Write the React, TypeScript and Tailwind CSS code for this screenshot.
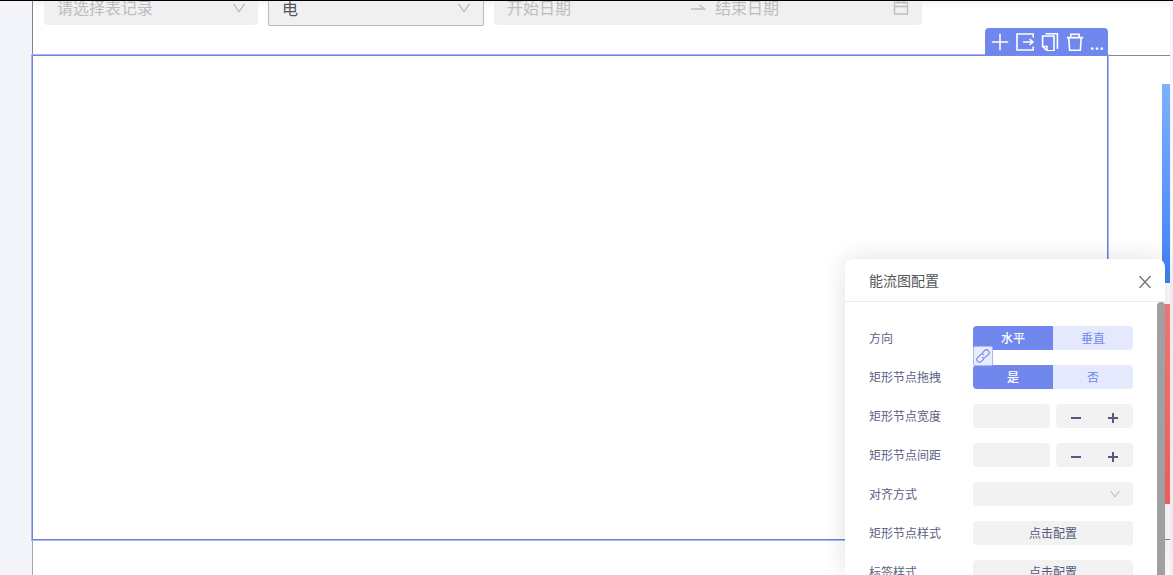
import { useState } from "react";
import type { ReactNode } from "react";

const Chevron = ({ className }: { className: string }) => (
    <svg viewBox="0 0 12 10" fill="none" stroke="currentColor" strokeWidth="1.3" className={className} aria-hidden="true">
        <path d="M0.5 1 L6 8.6 L11.5 1" />
    </svg>
);

const FilterBar = () => (
    <header className="flex h-[54px] shrink-0 items-start gap-[10px] overflow-hidden border-l border-[#858585] bg-linear-to-b from-[#f7f3fb] to-white to-15% pl-[11px] text-base text-[#bdbdbd]">
        <div className="relative -mt-3 w-[214px]">
            <select aria-label="表记录" className="block h-9 w-full appearance-none rounded bg-[#eff0f2] px-[13px] outline-none">
                <option>请选择表记录</option>
            </select>
            <Chevron className="pointer-events-none absolute top-[14px] right-[13px] h-[10px] w-3" />
        </div>
        <div className="relative -mt-3 w-[216px]">
            <select aria-label="能源类型" className="block h-[37px] w-full appearance-none rounded-xs border border-[#bcbcbc] bg-[#eff0f2] px-[13px] text-[#555] outline-none">
                <option>电</option>
            </select>
            <Chevron className="pointer-events-none absolute top-[14px] right-[14px] h-[10px] w-3" />
        </div>
        <div className="-mt-3 flex h-9 w-[428px] items-center rounded bg-[#eff0f2] px-[13px]">
            <input
                aria-label="开始日期"
                placeholder="开始日期"
                className="w-[183px] min-w-0 bg-transparent outline-none placeholder:text-[#bdbdbd]"
            />
            <svg viewBox="0 0 16 8" fill="none" stroke="currentColor" strokeWidth="1.3" className="mr-[9px] h-2 w-4 shrink-0" aria-hidden="true">
                <path d="M1 6 H14.5 L9.5 2" />
            </svg>
            <input
                aria-label="结束日期"
                placeholder="结束日期"
                className="min-w-0 flex-1 bg-transparent outline-none placeholder:text-[#bdbdbd]"
            />
            <svg viewBox="0 0 16 16" fill="none" stroke="currentColor" strokeWidth="1.3" className="size-4 shrink-0" aria-hidden="true">
                <path d="M1.5 3.5 H14.5 V15 H1.5 Z M1.5 7.5 H14.5 M5 2 V5 M11 2 V5" />
            </svg>
        </div>
    </header>
);

const tools = [
    { name: "添加", path: "M9 0.8 V17.2 M0.8 9 H17.2" },
    { name: "移动", path: "M17.2 4.5 V1 H1 V17 H17.2 V13.5 M7 9 H17 M13.5 6.2 L17 9 L13.5 11.8" },
    { name: "复制", path: "M1.6 3 H13 V17.8 H6 L1.6 13.5 Z M1.6 13.5 H6 V17.8 M4.5 0.6 H16.4 V16" },
    { name: "删除", path: "M0.8 4.6 H17.2 M4.8 4.6 V1.2 H13.2 V4.6 M2.8 4.6 L3.6 17.2 H14.4 L15.2 4.6" },
];

const Toolbar = () => (
    <div className="absolute -top-7 -right-px flex h-7 items-center gap-[7px] rounded-t bg-[#7087ee] pr-[5px] pl-[6px] text-white">
        {tools.map((tool) => (
            <button key={tool.name} aria-label={tool.name} className="size-[18px]">
                <svg viewBox="0 0 18 18" fill="none" stroke="currentColor" strokeWidth="1.6" className="size-[18px]">
                    <path d={tool.path} />
                </svg>
            </button>
        ))}
        <button aria-label="更多" className="h-[18px] w-3">
            <svg viewBox="0 0 12 18" fill="currentColor" className="h-[18px] w-3">
                <path d="M0 14.5 h2.4 v2.2 h-2.4z M4.8 14.5 h2.4 v2.2 h-2.4z M9.6 14.5 h2.4 v2.2 h-2.4z" />
            </svg>
        </button>
    </div>
);

const Row = ({ label, htmlFor, children }: { label: string; htmlFor?: string; children: ReactNode }) => (
    <div className="flex h-6 shrink-0 items-center justify-between">
        <label htmlFor={htmlFor} className="text-[#5b6181]">{label}</label>
        <div className="w-40">{children}</div>
    </div>
);

const Segmented = ({ label, options }: { label: string; options: string[] }) => {
    const [value, setValue] = useState(options[0]);
    return (
        <div role="group" aria-label={label} className="flex overflow-hidden rounded">
            {options.map((option) => (
                <button
                    key={option}
                    aria-pressed={value === option}
                    onClick={() => setValue(option)}
                    className={`h-6 flex-1 ${value === option ? "bg-[#7087ee] font-medium text-white" : "bg-[#e4e9fd] text-[#7087ee]"}`}
                >
                    {option}
                </button>
            ))}
        </div>
    );
};

const Stepper = ({ id }: { id: string }) => {
    const [value, setValue] = useState("");
    const step = (delta: number) => setValue(String(Number(value) + delta));
    return (
        <div className="grid grid-cols-2 gap-[6px]">
            <input
                id={id}
                value={value}
                onChange={(e) => setValue(e.target.value)}
                className="h-6 min-w-0 rounded bg-[#f2f2f2] px-2 text-[#5b6181] outline-none"
            />
            <div className="flex h-6 rounded bg-[#f2f2f2] px-px text-[#555b7c]">
                <button aria-label="减少" onClick={() => step(-1)} className="flex flex-1 items-center justify-center pt-1">
                    <svg viewBox="0 0 10 10" stroke="currentColor" strokeWidth="2" className="size-[10px]">
                        <path d="M0 5 H10" />
                    </svg>
                </button>
                <button aria-label="增加" onClick={() => step(1)} className="flex flex-1 items-center justify-center pt-1">
                    <svg viewBox="0 0 10 10" stroke="currentColor" strokeWidth="2" className="size-[10px]">
                        <path d="M0 5 H10 M5 0 V10" />
                    </svg>
                </button>
            </div>
        </div>
    );
};

const ConfigPanel = () => (
    <section className="absolute top-[258px] right-2 bottom-0 flex w-80 flex-col overflow-hidden rounded-t-lg bg-white text-xs shadow-[0_0_24px_rgba(0,0,0,0.12)]">
        <div className="flex h-[43px] shrink-0 items-center justify-between border-b border-[#ebebeb] pr-[14px] pl-6">
            <h2 className="text-sm text-[#555]">能流图配置</h2>
            <button aria-label="关闭" className="pt-1 text-[#777]">
                <svg viewBox="0 0 12 12" fill="none" stroke="currentColor" strokeWidth="1.4" className="size-3">
                    <path d="M0.5 0 L11.5 12 M11.5 0 L0.5 12" />
                </svg>
            </button>
        </div>
        <div className="flex min-h-0 flex-1">
            <div className="flex flex-1 flex-col gap-[15px] overflow-y-auto px-6 pt-6 [scrollbar-width:none]">
                <Row label="方向">
                    <div className="relative">
                        <Segmented label="方向" options={["水平", "垂直"]} />
                        <button
                            aria-label="关联"
                            className="absolute top-5 left-0 z-10 flex size-5 items-center justify-center rounded-xs border border-[#a9b7f5] bg-[#e8ecfd] text-[#7087ee]"
                        >
                            <svg viewBox="0 0 14 14" fill="none" stroke="currentColor" strokeWidth="1.1" className="size-[14px]">
                                <path d="M6 4.2 L8.6 1.6 A2.6 2.6 0 0 1 12.4 5.4 L9.6 8.2 A2.6 2.6 0 0 1 6 8.2 M8 9.8 L5.4 12.4 A2.6 2.6 0 0 1 1.6 8.6 L4.4 5.8 A2.6 2.6 0 0 1 8 5.8" />
                            </svg>
                        </button>
                    </div>
                </Row>
                <Row label="矩形节点拖拽">
                    <Segmented label="矩形节点拖拽" options={["是", "否"]} />
                </Row>
                <Row label="矩形节点宽度" htmlFor="node-width">
                    <Stepper id="node-width" />
                </Row>
                <Row label="矩形节点间距" htmlFor="node-gap">
                    <Stepper id="node-gap" />
                </Row>
                <Row label="对齐方式" htmlFor="align">
                    <div className="relative">
                        <select id="align" className="block h-6 w-full appearance-none rounded bg-[#f2f2f2] px-2 text-[#5b6181] outline-none">
                            <option></option>
                        </select>
                        <Chevron className="pointer-events-none absolute top-2 right-3 h-2 w-3 text-[#bdbdbd]" />
                    </div>
                </Row>
                <Row label="矩形节点样式" htmlFor="node-style">
                    <button id="node-style" className="block h-6 w-full rounded bg-[#f2f2f2] text-[#555b7c]">点击配置</button>
                </Row>
                <Row label="标签样式" htmlFor="label-style">
                    <button id="label-style" className="block h-6 w-full rounded bg-[#f2f2f2] text-[#555b7c]">点击配置</button>
                </Row>
            </div>
            <div className="w-2 rounded-t bg-[#a0a0a0]" />
        </div>
    </section>
);

const App = () => {
    return (
        <div className="relative flex h-screen overflow-hidden border-t border-black bg-white font-['Noto_Sans_CJK_SC',sans-serif]">
            <aside className="w-8 shrink-0 bg-[#f3f5fa]" />
            <main className="flex min-w-0 flex-1 flex-col">
                <FilterBar />
                <div className="flex h-[485px] shrink-0">
                    <div className="relative flex-1 border border-[#6d82de] ring-1 ring-[#a9b5f2]">
                        <Toolbar />
                    </div>
                    <div className="flex w-[62px] flex-col items-end gap-[21px] border-y border-[#858585] pt-7">
                        <div className="h-[199px] w-2 bg-linear-to-b from-[#7db1ff] to-[#3f80f5]" />
                        <div className="h-[200px] w-2 bg-linear-to-b from-[#fb7c7c] to-[#fb6060]" />
                    </div>
                </div>
                <div className="flex-1 border-l border-[#a5a5a5]" />
            </main>
            <div className="w-[3px] shrink-0 bg-[#f5f5fb]" />
            <ConfigPanel />
        </div>
    );
};

export default App;
